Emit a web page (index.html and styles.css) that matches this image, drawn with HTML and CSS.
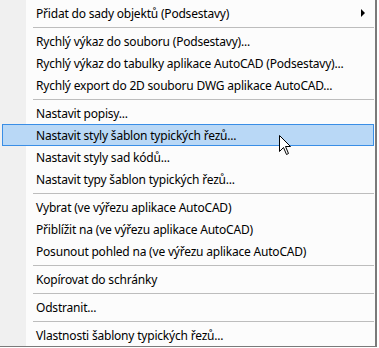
FILE: index.html
```html
<!DOCTYPE html>
<html lang="cs">
<head>
  <meta charset="UTF-8">
  <title>Kontextová nabídka</title>
  <link rel="stylesheet" href="styles.css">
</head>
<body>
  <div class="menu">
    <div class="item sub"><span>Přidat do sady objektů (Podsestavy)</span><span class="arrow"></span></div>
    <div class="sep"></div>
    <div class="item">Rychlý výkaz do souboru (Podsestavy)...</div>
    <div class="item">Rychlý výkaz do tabulky aplikace AutoCAD (Podsestavy)...</div>
    <div class="item">Rychlý export do 2D souboru DWG aplikace AutoCAD...</div>
    <div class="sep"></div>
    <div class="item">Nastavit popisy...</div>
    <div class="item active">Nastavit styly šablon typických řezů...</div>
    <div class="item">Nastavit styly sad kódů...</div>
    <div class="item">Nastavit typy šablon typických řezů...</div>
    <div class="sep"></div>
    <div class="item">Vybrat (ve výřezu aplikace AutoCAD)</div>
    <div class="item">Přiblížit na (ve výřezu aplikace AutoCAD)</div>
    <div class="item">Posunout pohled na (ve výřezu aplikace AutoCAD)</div>
    <div class="sep"></div>
    <div class="item">Kopírovat do schránky</div>
    <div class="sep"></div>
    <div class="item">Odstranit...</div>
    <div class="sep"></div>
    <div class="item">Vlastnosti šablony typických řezů...</div>
  </div>

  <svg class="cursor" width="13" height="21" viewBox="0 0 13 21">
    <path d="M0.5 0.5 L0.5 16.5 L4.5 12.5 L7.5 19.5 L9.5 18.5 L6.5 11.5 L11.5 11.5 Z" fill="#fff" stroke="#000" stroke-width="1"/>
  </svg>
</body>
</html>
```

FILE: styles.css
```css
body {
  margin: 0;
  background: #fff;
  font-family: 'Noto Sans', 'Open Sans', sans-serif;
  font-size: 12px;
  letter-spacing: -0.2px;
  color: #000;
}
.menu {
  position: relative;
  width: 377px;
  height: 347px;
  box-sizing: border-box;
  padding: 2px 1px 0 2px;
  background: linear-gradient(to right, #f0f0f0 26px, #fcfcfc 26px);
  border-right: 2px solid #7a7a7a;
  border-bottom: 1px solid #7a7a7a;
}
.item {
  height: 22px;
  box-sizing: border-box;
  display: flex;
  align-items: center;
  justify-content: space-between;
  padding-left: 33px;
  padding-right: 8px;
  border: 1px solid transparent;
  white-space: nowrap;
}
.item.active {
  background: #b9d8f6;
  border-color: #3a8ee6;
}
.arrow {
  width: 0;
  height: 0;
  border-top: 4px solid transparent;
  border-bottom: 4px solid transparent;
  border-left: 4px solid #000;
}
.sep {
  height: 6px;
  display: flex;
  align-items: center;
  padding-left: 31px;
}
.sep::after {
  content: "";
  flex: 1;
  height: 1px;
  background: #bdbdbd;
}
.cursor {
  position: absolute;
  left: 279px;
  top: 135px;
}
```
